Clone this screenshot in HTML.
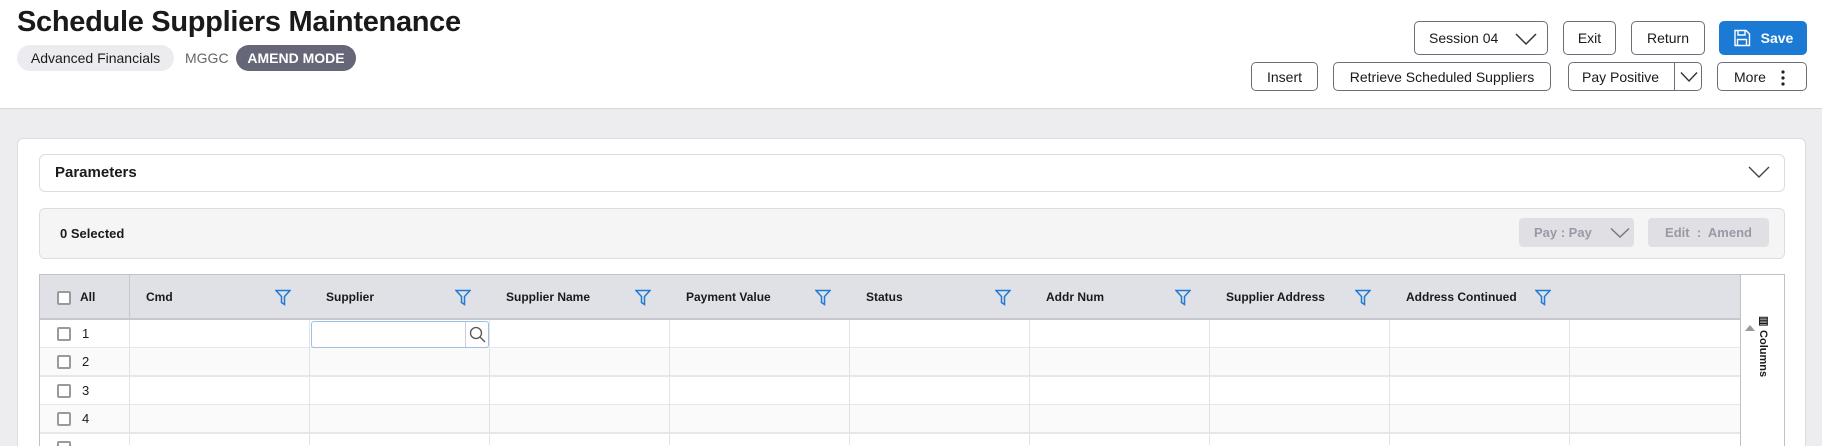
<!DOCTYPE html>
<html style="width:1822px;height:446px;overflow:hidden"><head><meta charset="utf-8"><style>
*{box-sizing:border-box;margin:0;padding:0}
body{width:1822px;height:446px;overflow:hidden;background:#ededf0;font-family:"Liberation Sans",sans-serif;color:#1a1a1a;position:relative}
.a{position:absolute}
.hdr{left:0;top:0;width:1822px;height:109px;background:#fff;border-bottom:1px solid #d6d6de}
.btn{position:absolute;border:1px solid #6e6e7a;border-radius:5px;background:#fff;font-size:14px;display:flex;align-items:center;justify-content:center;color:#1a1a1a}
.card{left:17px;top:138px;width:1789px;height:308px;background:#fff;border:1px solid #dcdce2;border-bottom:none;border-radius:6px 6px 0 0}
.cb{position:absolute;width:14px;height:14px;border:2px solid #9a9a9a;border-radius:2px;background:#fff}
</style></head><body>
<div class="a hdr"></div>
<div class="a" style="left:17px;top:6px;font-size:29px;font-weight:bold;letter-spacing:-0.3px">Schedule Suppliers Maintenance</div>
<div class="a" style="left:17px;top:45px;width:157px;height:26px;border-radius:13px;background:#ececf0;font-size:14px;line-height:26px;text-align:center">Advanced Financials</div>
<div class="a" style="left:185px;top:45px;font-size:14px;line-height:26px;color:#666">MGGC</div>
<div class="a" style="left:236px;top:45px;width:120px;height:26px;border-radius:13px;background:#656677;color:#fff;font-size:14px;font-weight:bold;line-height:26px;text-align:center">AMEND MODE</div>

<div class="btn" style="left:1414px;top:21px;width:134px;height:34px;justify-content:flex-start;padding-left:14px">Session 04
<svg class="a" style="left:100px;top:10px" width="22" height="14" viewBox="0 0 22 14"><path d="M1 2 L11 12 L21 2" fill="none" stroke="#333" stroke-width="1.5"/></svg></div>
<div class="btn" style="left:1563px;top:21px;width:53px;height:34px">Exit</div>
<div class="btn" style="left:1631px;top:21px;width:74px;height:34px">Return</div>
<div class="btn" style="left:1719px;top:21px;width:88px;height:34px;background:#1a7ad4;border-color:#1a7ad4;color:#fff;font-weight:bold">
<svg style="margin-right:10px" width="18" height="18" viewBox="0 0 18 18"><path d="M2 1.5h11l3.5 3.5v11.5h-14.5z" fill="none" stroke="#fff" stroke-width="1.4"/><path d="M5 1.5v4.5h7v-4.5M4.5 16.5v-6h9v6" fill="none" stroke="#fff" stroke-width="1.4"/></svg>Save</div>

<div class="btn" style="left:1251px;top:62px;width:67px;height:29px">Insert</div>
<div class="btn" style="left:1333px;top:62px;width:218px;height:29px">Retrieve Scheduled Suppliers</div>
<div class="btn" style="left:1568px;top:62px;width:134px;height:29px;justify-content:flex-start;padding-left:13px">Pay Positive
<div class="a" style="left:105px;top:0;width:1px;height:27px;background:#6e6e7a"></div>
<svg class="a" style="left:111px;top:8px" width="18" height="12" viewBox="0 0 18 12"><path d="M1 1.5 L9 10 L17 1.5" fill="none" stroke="#333" stroke-width="1.4"/></svg></div>
<div class="btn" style="left:1717px;top:62px;width:90px;height:29px;justify-content:flex-start;padding-left:16px">More
<svg class="a" style="left:62px;top:7px" width="6" height="16" viewBox="0 0 6 16"><circle cx="3" cy="2" r="1.6" fill="#222"/><circle cx="3" cy="8" r="1.6" fill="#222"/><circle cx="3" cy="14" r="1.6" fill="#222"/></svg></div>

<div class="a card"></div>
<div class="a" style="left:39px;top:154px;width:1746px;height:38px;border:1px solid #dcdce2;border-radius:6px;background:#fff"></div>
<div class="a" style="left:55px;top:154px;line-height:38px;font-size:15px;font-weight:bold">Parameters</div>
<svg class="a" style="left:1748px;top:165px" width="22" height="14" viewBox="0 0 22 14"><path d="M1 2 L11 12 L21 2" fill="none" stroke="#444" stroke-width="1.4"/></svg>

<div class="a" style="left:39px;top:208px;width:1746px;height:51px;border:1px solid #dcdce2;border-radius:6px;background:#f5f5f6"></div>
<div class="a" style="left:60px;top:208px;line-height:51px;font-size:13px;font-weight:bold">0 Selected</div>
<div class="a" style="left:1519px;top:218px;width:115px;height:29px;background:#dfdfe4;border-radius:4px;color:#9a9aa6;font-size:13px;font-weight:bold;line-height:29px;padding-left:15px">Pay : Pay
<svg class="a" style="left:91px;top:9px" width="20" height="12" viewBox="0 0 20 12"><path d="M1 1.5 L10 10 L19 1.5" fill="none" stroke="#777" stroke-width="1.4"/></svg></div>
<div class="a" style="left:1648px;top:218px;width:121px;height:29px;background:#dfdfe4;border-radius:4px;color:#9a9aa6;font-size:13px;font-weight:bold;line-height:29px;text-align:center">Edit &nbsp;:&nbsp; Amend</div>

<div class="a" style="left:39px;top:274px;width:1746px;height:172px;border:1px solid #bfc0c8;border-bottom:none;background:#fff"></div>
<div class="a" style="left:40px;top:275px;width:1700px;height:45px;background:#e0e1e6;border-bottom:2px solid #c6c7cf"></div>
<div class="a" style="left:129px;top:275px;width:1px;height:45px;background:#c6c7cf"></div>
<div class="cb" style="left:57px;top:291px"></div>
<div class="a" style="left:80px;top:275px;line-height:45px;font-size:12px;font-weight:bold">All</div>
<div id="hd"></div>
<div class="a" style="left:1740px;top:275px;width:1px;height:171px;background:#bfc0c8"></div>
<div class="a" style="left:1757px;top:314px;font-size:11px;writing-mode:vertical-rl;font-weight:bold">&#9636; Columns</div>
<div class="a" style="left:1745px;top:325px;width:0;height:0;border-left:5px solid transparent;border-right:5px solid transparent;border-bottom:6px solid #999"></div>

<script>
var cols=["Cmd","Supplier","Supplier Name","Payment Value","Status","Addr Num","Supplier Address","Address Continued"];
var h="";
var fil='<svg width="16" height="17" viewBox="0 0 16 17"><path d="M1 1.5h14l-5.5 6v8l-3-2v-6z" fill="none" stroke="#1f7ad4" stroke-width="1.5"/></svg>';
for(var i=0;i<8;i++){var x=129+i*180;
h+='<div class="a" style="left:'+(x+17)+'px;top:275px;line-height:45px;font-size:12px;font-weight:bold">'+cols[i]+'</div>';
h+='<div class="a" style="left:'+(x+146)+'px;top:289px">'+fil+'</div>';}
var tops=[320,348,377,405,434];
for(var r=0;r<5;r++){var y=tops[r];var bg=r%2?'#fafafa':'#fff';var hh=(r==4)?12:29;
h+='<div class="a" style="left:40px;top:'+y+'px;width:1700px;height:'+hh+'px;background:'+bg+';border-bottom:'+(r==4?0:2)+'px solid #e6e7ec"></div>';
h+='<div class="cb" style="left:57px;top:'+(y+7)+'px"></div>';
if(r<4)h+='<div class="a" style="left:82px;top:'+y+'px;line-height:28px;font-size:13px">'+(r+1)+'</div>';
for(var i=0;i<9;i++){h+='<div class="a" style="left:'+(129+i*180)+'px;top:'+y+'px;width:1px;height:'+(hh-1)+'px;background:#e2e2e8"></div>';}}
h+='<div class="a" style="left:311px;top:321px;width:178px;height:27px;border:1px solid #9cc0e6;border-radius:3px;background:#fff"></div>';
h+='<div class="a" style="left:465px;top:322px;width:1px;height:25px;background:#ccd"></div>';
h+='<svg class="a" style="left:469px;top:326px" width="17" height="17" viewBox="0 0 17 17"><circle cx="7" cy="7" r="5.5" fill="none" stroke="#555" stroke-width="1.3"/><path d="M11 11l5 5" stroke="#555" stroke-width="1.3"/></svg>';
document.getElementById("hd").innerHTML=h;
</script>
</body></html>
